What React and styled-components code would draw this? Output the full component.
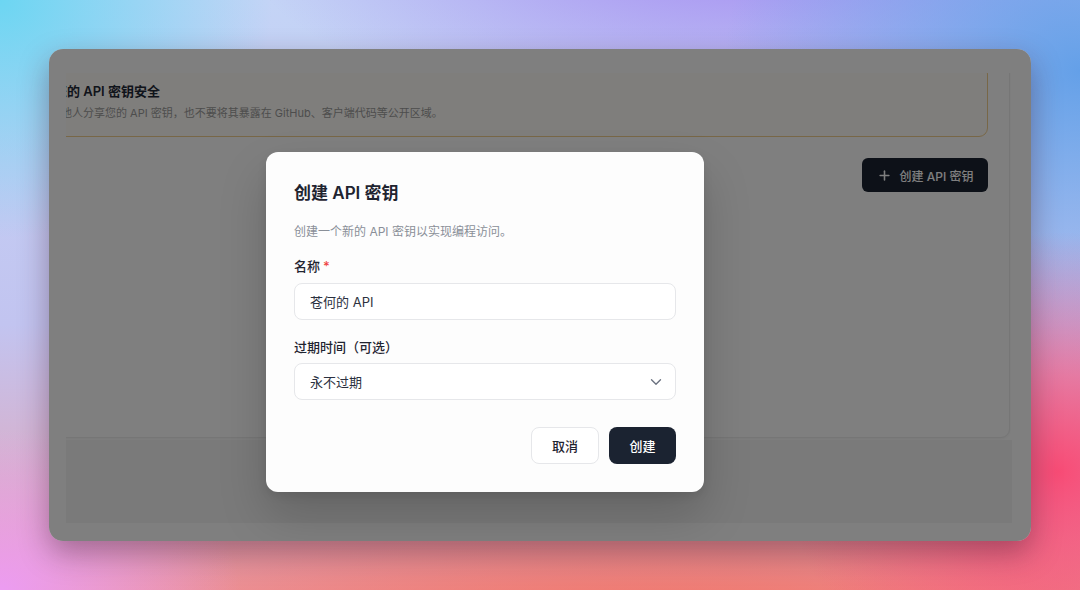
import React from 'react'
import styled, { createGlobalStyle } from 'styled-components'
import { Plus, ChevronDown } from 'lucide-react'

const GlobalStyle = createGlobalStyle`
  html, body {
    margin: 0;
    padding: 0;
    width: 1080px;
    height: 590px;
    overflow: hidden;
  }
  * { box-sizing: border-box; }
  body {
    font-family: Inter, "Noto Sans CJK SC", "Noto Sans", sans-serif;
  }
`

const Desktop = styled.div`
  width: 1080px;
  height: 590px;
  padding: 49px;
  background:
    radial-gradient(ellipse 300px 200px at 0% 100%, rgba(236, 156, 242, 1), rgba(236, 156, 242, 0) 80%),
    radial-gradient(ellipse 340px 300px at 98% 80%, rgba(248, 76, 118, 1), rgba(248, 76, 118, 0) 80%),
    radial-gradient(ellipse 900px 260px at 62% 115%, rgba(244, 100, 76, 1), rgba(244, 100, 76, 0) 85%),
    radial-gradient(ellipse 420px 360px at 100% 12%, rgba(100, 160, 232, 1), rgba(100, 160, 232, 0) 85%),
    radial-gradient(ellipse 620px 260px at 70% -14%, rgba(160, 128, 240, 1), rgba(160, 128, 240, 0) 85%),
    radial-gradient(ellipse 320px 280px at 0% 0%, rgba(108, 214, 242, 1), rgba(108, 214, 242, 0) 85%),
    linear-gradient(180deg, #c4d4f6 0%, #c2c4f0 55%, #e8a0b0 100%);
`

const Window = styled.div`
  position: relative;
  width: 982px;
  height: 492px;
  border-radius: 14px;
  background: #ffffff;
  overflow: hidden;
  box-shadow: 0 12px 30px rgba(60, 20, 40, 0.4);
  display: flex;
  flex-direction: column;
  padding: 24px 19px 18px 17px;
`

const Viewport = styled.div`
  flex: 0 0 367px;
  overflow: hidden;
`

const Card = styled.div`
  margin: -30px 2px 0 -76px;
  height: 395px;
  background: #ffffff;
  border: 1px solid #ececec;
  border-radius: 9px;
  padding: 21px;
  box-shadow: 0 1px 3px rgba(0, 0, 0, 0.05);
`

const Notice = styled.div`
  height: 72px;
  border: 1px solid #f1cf8e;
  border-radius: 9px;
  background: #fffdf8;
  padding: 15px 15px 14px;
`

const NoticeTitle = styled.div`
  font-size: 13px;
  line-height: 20px;
  font-weight: 600;
  color: #1f2937;
  white-space: nowrap;
`

const NoticeText = styled.div`
  margin-top: 3px;
  font-size: 11px;
  line-height: 18px;
  color: #9b9b9b;
  white-space: nowrap;
`

const Toolbar = styled.div`
  display: flex;
  justify-content: flex-end;
  margin-top: 21px;
`

const DarkButton = styled.button`
  display: flex;
  align-items: center;
  justify-content: center;
  gap: ${p => (p.$icon ? '8px' : '0')};
  width: ${p => p.$w}px;
  height: ${p => p.$h}px;
  padding: 0;
  border: none;
  border-radius: ${p => p.$r}px;
  background: #1b2331;
  color: #ffffff;
  font-family: inherit;
  font-size: ${p => p.$fs}px;
  font-weight: 500;
`

const Footer = styled.div`
  flex: 1;
  background: #f4f4f4;
`

const Overlay = styled.div`
  position: absolute;
  inset: 0;
  background: rgba(0, 0, 0, 0.5);
`

const Modal = styled.div`
  position: absolute;
  left: 217px;
  top: 103px;
  width: 438px;
  height: 340px;
  background: #fdfdfd;
  border-radius: 12px;
  box-shadow: 0 24px 48px rgba(0, 0, 0, 0.18), 0 4px 10px rgba(0, 0, 0, 0.08);
  padding: 29px 28px 28px;
  display: flex;
  flex-direction: column;
`

const Title = styled.h2`
  margin: 0;
  font-size: 17px;
  line-height: 24px;
  font-weight: 600;
  color: #1f2430;
`

const Subtitle = styled.p`
  margin: 17px 0 0;
  font-size: 12px;
  line-height: 20px;
  color: #8a8f98;
`

const Label = styled.label`
  display: block;
  margin-top: ${p => p.$mt}px;
  font-size: 13px;
  line-height: 18px;
  font-weight: 500;
  color: #1f2430;
`

const Required = styled.span`
  color: #ef4444;
  margin-left: 3px;
`

const Field = styled.div`
  display: flex;
  align-items: center;
  gap: 8px;
  margin-top: ${p => p.$mt}px;
  height: 37px;
  padding: 0 10px 0 0;
  border: 1px solid #e6e7ea;
  border-radius: 8px;
  background: #ffffff;
  font-size: 13px;
  color: #2b3140;
`

const FieldText = styled.span`
  flex: 1;
  padding-left: 15px;
`

const Actions = styled.div`
  display: flex;
  justify-content: flex-end;
  gap: 10px;
  margin-top: 27px;
`

const GhostButton = styled.button`
  width: 68px;
  height: 37px;
  padding: 0;
  border: 1px solid #e6e7ea;
  border-radius: 8px;
  background: #ffffff;
  color: #1f2430;
  font-family: inherit;
  font-size: 13px;
  font-weight: 500;
`

const App = () => {
  return (
    <Desktop>
      <GlobalStyle />
      <Window>
        <Viewport>
          <Card>
            <Notice>
              <NoticeTitle>保护您的 API 密钥安全</NoticeTitle>
              <NoticeText>
                请勿与他人分享您的 API 密钥，也不要将其暴露在 GitHub、客户端代码等公开区域。
              </NoticeText>
            </Notice>
            <Toolbar>
              <DarkButton $icon $w={126} $h={34} $r={6} $fs={12}>
                <Plus size={15} strokeWidth={2.5} />
                创建 API 密钥
              </DarkButton>
            </Toolbar>
          </Card>
        </Viewport>
        <Footer />
        <Overlay />
        <Modal>
          <Title>创建 API 密钥</Title>
          <Subtitle>创建一个新的 API 密钥以实现编程访问。</Subtitle>
          <Label $mt={15}>
            名称<Required>*</Required>
          </Label>
          <Field $mt={8}>
            <FieldText>苍何的 API</FieldText>
          </Field>
          <Label $mt={18}>过期时间（可选）</Label>
          <Field $mt={7}>
            <FieldText>永不过期</FieldText>
            <ChevronDown size={18} color="#6b7280" strokeWidth={1.8} />
          </Field>
          <Actions>
            <GhostButton>取消</GhostButton>
            <DarkButton $w={67} $h={37} $r={8} $fs={13}>创建</DarkButton>
          </Actions>
        </Modal>
      </Window>
    </Desktop>
  )
}

export default App
